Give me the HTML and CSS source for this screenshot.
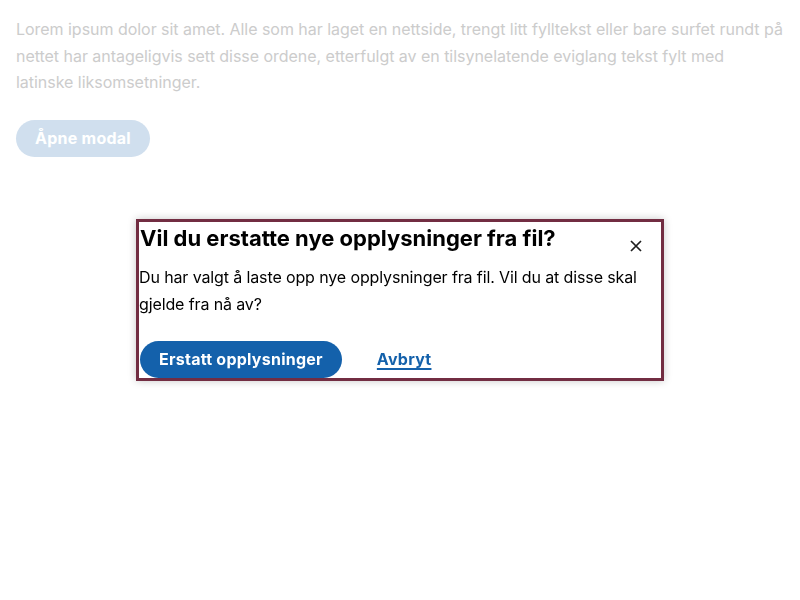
FILE: index.html
```html
<!DOCTYPE html>
<html lang="no">
<head>
<meta charset="utf-8">
<title>Modal</title>
<link rel="stylesheet" href="styles.css">
</head>
<body>
<main class="page">
  <p class="lead">Lorem ipsum dolor sit amet. Alle som har laget en nettside, trengt litt fylltekst eller bare surfet rundt på nettet har antageligvis sett disse ordene, etterfulgt av en tilsynelatende eviglang tekst fylt med latinske liksomsetninger.</p>
  <button class="btn btn-faded" type="button">Åpne modal</button>
</main>
<div class="backdrop">
  <div class="modal" role="dialog" aria-labelledby="mtitle">
    <div class="modal-head">
      <h2 class="modal-title" id="mtitle">Vil du erstatte nye opplysninger fra fil?</h2>
      <button class="close" type="button" aria-label="Lukk">
        <svg width="12" height="12" viewBox="0 0 12 12"><path d="M1 1L11 11M11 1L1 11" stroke="#1f1f1f" stroke-width="1.7" fill="none"/></svg>
      </button>
    </div>
    <p class="modal-text">Du har valgt å laste opp nye opplysninger fra fil. Vil du at disse skal gjelde fra nå av?</p>
    <div class="actions">
      <button class="btn btn-primary" type="button">Erstatt opplysninger</button>
      <button class="btn btn-link" type="button">Avbryt</button>
    </div>
  </div>
</div>
</body>
</html>
```
FILE: styles.css
```css
* { box-sizing: border-box; }
html, body { margin: 0; padding: 0; background: #fff; }
body {
  font-family: Inter, "Noto Sans", sans-serif;
  font-size: 16px;
  line-height: 26.5px;
  color: #000;
}
.page { padding: 16px; }
.lead { margin: 0 0 24px; color: #cccccc; letter-spacing: -0.035px; }
.btn {
  font-family: inherit;
  font-size: 16px;
  font-weight: 700;
  letter-spacing: 0.25px;
  height: 37px;
  padding: 0 19px;
  border: none;
  border-radius: 19px;
  display: inline-flex;
  align-items: center;
  cursor: pointer;
}
.btn-faded { background: #d0dfee; color: #fff; }
.backdrop {
  position: fixed;
  inset: 0;
  display: flex;
  align-items: center;
  justify-content: center;
}
.modal {
  width: 528px;
  background: #fff;
  border: 3px solid #722d42;
  box-shadow: 0 0 8px rgba(0,0,0,0.22);
}
.modal-head {
  display: flex;
  align-items: flex-start;
  justify-content: space-between;
}
.modal-title {
  margin: 0 0 0 1px;
  font-size: 22px;
  line-height: 32px;
  font-weight: 700;
  letter-spacing: 0;
}
.close {
  width: 48px;
  height: 48px;
  margin-top: 0;
  margin-right: 1px;
  margin-bottom: -16px;
  border: none;
  background: transparent;
  padding: 0;
  display: flex;
  align-items: center;
  justify-content: center;
  cursor: pointer;
}
.modal-text { margin: 10px 0 24px; line-height: 26.4px; letter-spacing: -0.12px; }
.actions { display: flex; gap: 16px; margin-left: 1px; }
.btn-primary { background: #1461ab; color: #fff; }
.btn-link {
  background: transparent;
  color: #1461ab;
  text-decoration: underline;
  text-underline-offset: 3px;
  text-decoration-thickness: 2px;
}
```
